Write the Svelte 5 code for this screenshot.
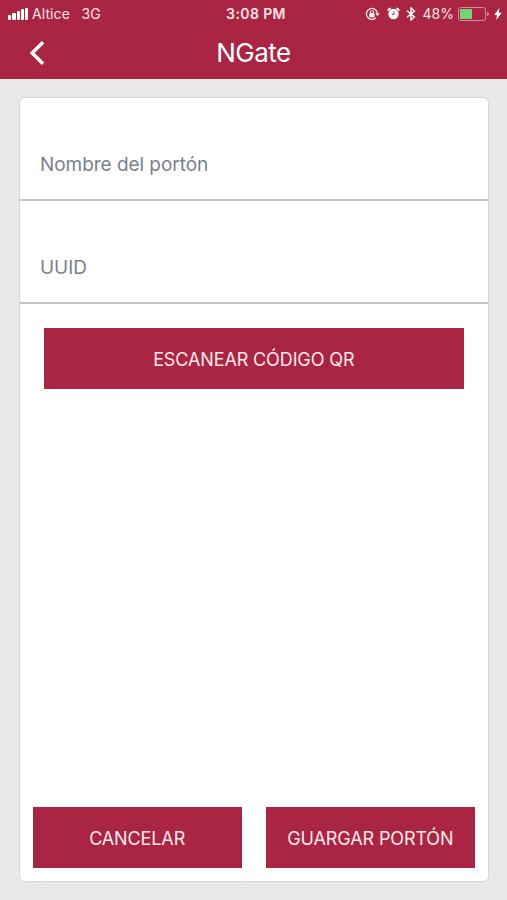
<script lang="ts">
  interface Field {
    id: 'name' | 'uuid';
    label: string;
  }

  const fields: Field[] = [
    { id: 'name', label: 'Nombre del portón' },
    { id: 'uuid', label: 'UUID' },
  ];

  const signalBars = [5, 6.5, 8.5, 10.5, 12];
  const battery = 48;

  let values = $state({ name: '', uuid: '' });

  function handleCancel() {
    values.name = '';
    values.uuid = '';
  }
</script>

<div class="screen">
  <header>
    <div class="status">
      <div class="carrier">
        <div class="signal">
          {#each signalBars as height}
            <span style="height: {height}px"></span>
          {/each}
        </div>
        <span class="network">Altice</span>
        <span class="kind">3G</span>
      </div>
      <span class="time">3:08 PM</span>
      <div class="indicators">
        <svg class="lock" width="15" height="14" viewBox="0 0 15 14" fill="none" stroke="#fbe3e8">
          <path d="M10.8 10.8A5.5 5.5 0 1 1 12.3 6" stroke-width="1.3" />
          <path d="M10.3 6.2h4.4L12.5 9.3z" fill="#fbe3e8" stroke="none" />
          <path d="M5.4 6.7V5.2a1.5 1.5 0 0 1 3 0v1.5" stroke-width="1.1" />
          <rect x="4.3" y="6.2" width="5.2" height="4" rx=".4" fill="#fff" stroke="none" />
        </svg>
        <svg class="alarm" width="13" height="13" viewBox="0 0 13 13" fill="none" stroke="#fff">
          <circle cx="6.5" cy="7" r="5.2" fill="#fff" stroke="none" />
          <path d="M1.2 3 3 1.5M11.8 3 10 1.5" stroke-width="1.8" stroke-linecap="round" />
          <path d="M7 4.4v3H4.8" stroke="#aa2543" stroke-width="1" />
        </svg>
        <svg class="bluetooth" width="10" height="14" viewBox="0 0 10 14" fill="none" stroke="#fff" stroke-width="1.4">
          <path d="m1 3.8 7.4 6.1L5 13V1l3.4 3.1L1 10.2" />
        </svg>
        <span class="percent">{battery}%</span>
        <div class="battery"><span style="width: {battery}%"></span></div>
        <svg class="bolt" width="8" height="12" viewBox="0 0 8 12" fill="#fff">
          <path d="M5.4 0 .2 7h2.7L2.2 12l5.6-7.2H4.7z" />
        </svg>
      </div>
    </div>
    <nav>
      <button class="back" aria-label="Volver">
        <svg width="16" height="26" viewBox="0 0 16 26" fill="none" stroke="#fff" stroke-width="3.5">
          <path d="M14 2.2 3.2 13 14 23.8" />
        </svg>
      </button>
      <h1>NGate</h1>
    </nav>
  </header>

  <main>
    {#each fields as field (field.id)}
      <input type="text" placeholder={field.label} bind:value={values[field.id]} />
    {/each}
    <button class="action scan">ESCANEAR CÓDIGO QR</button>
    <footer>
      <button class="action cancel" onclick={handleCancel}>CANCELAR</button>
      <button class="action save">GUARGAR PORTÓN</button>
    </footer>
  </main>
</div>

<style>
  :global(body) {
    margin: 0;
    background: #eae9e7;
  }

  .screen {
    display: flex;
    flex-direction: column;
    height: 100vh;
    box-sizing: border-box;
    padding-bottom: 18px;
    font-family: Inter, 'Liberation Sans', sans-serif;
    background: #eae9e7;
  }

  header {
    height: 79px;
    flex-shrink: 0;
    color: #fff;
    background: #aa2543;
  }

  .status {
    display: grid;
    grid-template-columns: 1fr auto 1fr;
    align-items: center;
    height: 27px;
    padding: 0 5px 0 8px;
    font-size: 14px;
    color: #fbe3e8;
  }

  .carrier,
  .indicators {
    display: flex;
    align-items: center;
  }

  .signal {
    display: flex;
    align-items: flex-end;
    gap: 1px;
    margin-right: 3.5px;
  }

  .signal span {
    width: 3.3px;
    border-radius: 1px;
    background: #fff;
  }

  .network {
    letter-spacing: 0.1px;
  }

  .kind {
    margin-left: 11.5px;
  }

  .time {
    position: relative;
    left: 1px;
    font-weight: 600;
    letter-spacing: 0.4px;
  }

  .indicators {
    justify-content: flex-end;
  }

  .alarm {
    margin-left: 7px;
  }

  .bluetooth {
    margin-left: 6px;
  }

  .percent {
    margin-left: 7px;
  }

  .battery {
    position: relative;
    width: 24px;
    height: 10px;
    margin: 0 8px 0 4px;
    padding: 1px;
    border: 1px solid #d78c9c;
    border-radius: 3px;
  }

  .battery span {
    display: block;
    height: 100%;
    border-radius: 1px;
    background: #70d66e;
  }

  .battery::after {
    content: '';
    position: absolute;
    top: 4px;
    right: -4px;
    width: 2px;
    height: 4px;
    border-radius: 0 2px 2px 0;
    background: #d78c9c;
  }

  nav {
    display: grid;
    grid-template-columns: 60px 1fr 60px;
    align-items: center;
    height: 51px;
  }

  button {
    border: none;
    border-radius: 0;
    font-family: inherit;
    cursor: pointer;
  }

  .back {
    display: flex;
    padding: 0 0 0 29px;
    background: none;
  }

  h1 {
    margin: 0;
    font-size: 26px;
    font-weight: 400;
    line-height: 51px;
    letter-spacing: -0.5px;
    text-align: center;
  }

  main {
    display: flex;
    flex-direction: column;
    flex: 1;
    box-sizing: border-box;
    margin: 18px 18px 0 19px;
    border: 1px solid #d6d7d7;
    border-radius: 6px;
    background: #fff;
  }

  input {
    box-sizing: border-box;
    width: 100%;
    height: 103px;
    padding: 32px 20px 0;
    border: none;
    border-bottom: 2px solid #bfc4c8;
    border-radius: 0;
    outline: none;
    font-family: inherit;
    font-size: 19px;
    letter-spacing: -0.05px;
    color: #343a42;
    background: none;
  }

  input::placeholder {
    color: #7b808b;
    opacity: 1;
  }

  .action {
    height: 61px;
    padding: 2px 0 0;
    font-size: 18px;
    letter-spacing: -0.12px;
    color: #ffe9ec;
    background: #aa2543;
  }

  .scan {
    margin: 24px 24px 0 23.5px;
  }

  footer {
    display: grid;
    grid-template-columns: 1fr 1fr;
    gap: 24px;
    margin: auto 13px 13px 12.5px;
  }
</style>
